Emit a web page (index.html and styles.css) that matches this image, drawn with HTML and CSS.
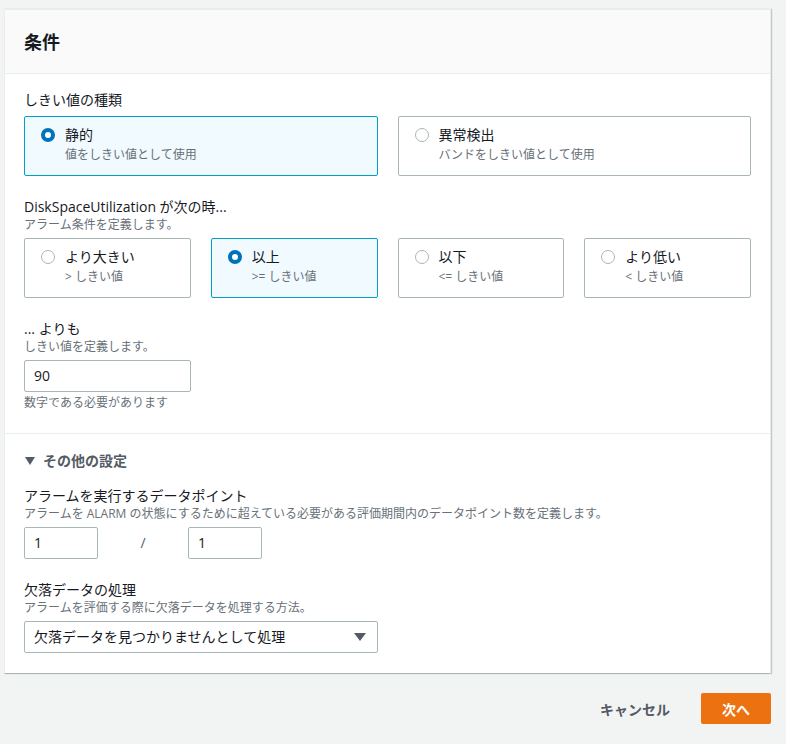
FILE: index.html
```html
<!DOCTYPE html>
<html lang="ja">
<head>
<meta charset="UTF-8">
<meta name="viewport" content="width=device-width, initial-scale=1.0">
<title>条件</title>
<link rel="stylesheet" href="styles.css">
</head>
<body>

<div class="card">
  <div class="card-header">
    <h2>条件</h2>
  </div>

  <!-- しきい値 -->
  <div class="section">
    <div class="field">
      <div class="label">しきい値の種類</div>
      <div class="tiles tiles-2">
        <div class="tile selected">
          <span class="radio checked"></span>
          <div>
            <div class="tile-title">静的</div>
            <div class="tile-desc">値をしきい値として使用</div>
          </div>
        </div>
        <div class="tile">
          <span class="radio"></span>
          <div>
            <div class="tile-title">異常検出</div>
            <div class="tile-desc">バンドをしきい値として使用</div>
          </div>
        </div>
      </div>
    </div>

    <div class="field">
      <div class="label">DiskSpaceUtilization が次の時...</div>
      <div class="desc">アラーム条件を定義します。</div>
      <div class="tiles tiles-4">
        <div class="tile">
          <span class="radio"></span>
          <div>
            <div class="tile-title">より大きい</div>
            <div class="tile-desc">&gt; しきい値</div>
          </div>
        </div>
        <div class="tile selected">
          <span class="radio checked"></span>
          <div>
            <div class="tile-title">以上</div>
            <div class="tile-desc">&gt;= しきい値</div>
          </div>
        </div>
        <div class="tile">
          <span class="radio"></span>
          <div>
            <div class="tile-title">以下</div>
            <div class="tile-desc">&lt;= しきい値</div>
          </div>
        </div>
        <div class="tile">
          <span class="radio"></span>
          <div>
            <div class="tile-title">より低い</div>
            <div class="tile-desc">&lt; しきい値</div>
          </div>
        </div>
      </div>
    </div>

    <div class="field">
      <div class="label">... よりも</div>
      <div class="desc">しきい値を定義します。</div>
      <div class="input w-threshold">90</div>
      <div class="constraint">数字である必要があります</div>
    </div>
  </div>

  <!-- その他の設定 -->
  <div class="section section-more">
    <div class="expander">
      <span class="caret"></span>
      その他の設定
    </div>

    <div class="field">
      <div class="label">アラームを実行するデータポイント</div>
      <div class="desc">アラームを ALARM の状態にするために超えている必要がある評価期間内のデータポイント数を定義します。</div>
      <div class="datapoints">
        <div class="input w-small">1</div>
        <span class="slash">/</span>
        <div class="input w-small">1</div>
      </div>
    </div>

    <div class="field">
      <div class="label">欠落データの処理</div>
      <div class="desc">アラームを評価する際に欠落データを処理する方法。</div>
      <div class="input select">
        <span>欠落データを見つかりませんとして処理</span>
        <span class="select-arrow"></span>
      </div>
    </div>
  </div>
</div>

<div class="actions">
  <button class="btn-link">キャンセル</button>
  <button class="btn-primary">次へ</button>
</div>

</body>
</html>
```

FILE: styles.css
```css
body {
  margin: 0;
  padding: 9px 15px 0 4px;
  background-color: #f2f3f3;
  font-family: "Open Sans", "Noto Sans CJK JP", sans-serif;
  font-size: 14px;
  line-height: 20px;
  color: #16191f;
}
.card {
  background: #fff;
  border: 1px solid #eaeded;
  border-bottom: 1px solid #aab7b8;
  box-shadow: 1px 0 1px rgba(0, 28, 36, 0.2);
}
.card-header {
  height: 63px;
  display: flex;
  align-items: center;
  padding: 0 19px;
  background: #fafafa;
  border-bottom: 1px solid #eaeded;
}
.card-header h2 {
  margin: 0;
  font-size: 18px;
  font-weight: 700;
  line-height: 22px;
}
.section {
  padding: 16px 19px 22px;
}
.section-more {
  border-top: 1px solid #eaeded;
  padding-top: 17px;
  padding-bottom: 20px;
}
.field + .field {
  margin-top: 21px;
}
.label {
  line-height: 20px;
}
.desc {
  font-size: 12px;
  line-height: 16px;
  color: #687078;
}
.constraint {
  font-size: 12px;
  line-height: 16px;
  color: #687078;
  margin-top: 3px;
}
.tiles {
  display: grid;
  gap: 20px;
  margin-top: 5px;
}
.field > .label + .tiles {
  margin-top: 6px;
}
.tiles-2 {
  grid-template-columns: 1fr 1fr;
}
.tiles-4 {
  grid-template-columns: repeat(4, 1fr);
}
.tile {
  height: 60px;
  box-sizing: border-box;
  border: 1px solid #aab7b8;
  border-radius: 2px;
  padding: 8px 16px 0;
  display: flex;
  gap: 10px;
}
.tile.selected {
  border-color: #00a1c9;
  background: #f1faff;
}
.radio {
  flex: none;
  width: 14px;
  height: 14px;
  box-sizing: border-box;
  margin-top: 3px;
  border: 1px solid #aab7b8;
  border-radius: 50%;
  background: #fff;
}
.radio.checked {
  border: 4px solid #0073bb;
}
.tile-title {
  line-height: 20px;
}
.tile-desc {
  font-size: 12px;
  line-height: 16px;
  color: #687078;
  margin-top: 2px;
}
.input {
  box-sizing: border-box;
  height: 32px;
  border: 1px solid #aab7b8;
  border-radius: 2px;
  padding: 0 9px;
  display: flex;
  align-items: center;
  margin-top: 5px;
}
.w-threshold {
  width: 167px;
}
.w-small {
  width: 74px;
}
.datapoints {
  display: flex;
  align-items: center;
  margin-top: 5px;
}
.datapoints .input {
  margin-top: 0;
}
.slash {
  width: 90px;
  text-align: center;
  color: #545b64;
}
.select {
  width: 354px;
  justify-content: space-between;
  padding-right: 11px;
}
.select-arrow {
  width: 0;
  height: 0;
  border-left: 6px solid transparent;
  border-right: 6px solid transparent;
  border-top: 8px solid #545b64;
}
.expander {
  display: flex;
  align-items: center;
  gap: 8px;
  font-weight: 700;
  color: #545b64;
  line-height: 20px;
  margin-bottom: 15px;
}
.caret {
  width: 0;
  height: 0;
  margin-left: 1px;
  border-left: 5px solid transparent;
  border-right: 5px solid transparent;
  border-top: 8px solid #545b64;
}
.actions {
  display: flex;
  justify-content: flex-end;
  align-items: center;
  gap: 11px;
  margin-top: 19px;
}
.btn-link {
  font-family: inherit;
  font-size: 14px;
  font-weight: 700;
  color: #545b64;
  background: none;
  border: none;
  padding: 4px 20px;
}
.btn-primary {
  font-family: inherit;
  font-size: 14px;
  font-weight: 700;
  color: #fff;
  background: #ec7211;
  border: none;
  border-radius: 2px;
  width: 70px;
  height: 31px;
}
```
